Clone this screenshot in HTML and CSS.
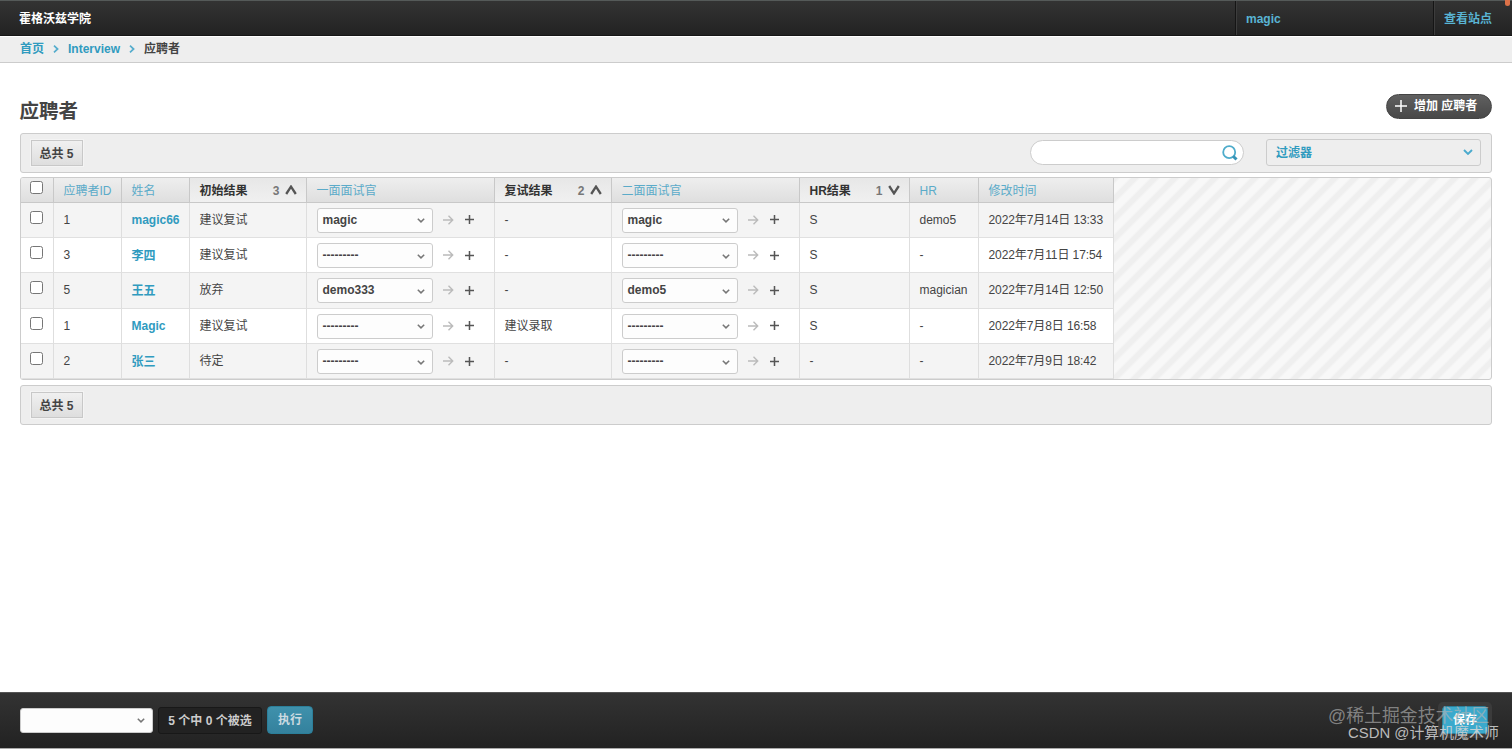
FILE: index.html
```
<!DOCTYPE html>
<html lang="zh-CN">
<head>
<meta charset="utf-8">
<title>应聘者</title>
<link rel="stylesheet" href="styles.css">
</head>
<body>
<svg class="sprite" width="0" height="0">
  <symbol id="crumb" viewBox="0 0 6 8"><path d="M1 .7 4.6 4 1 7.3" fill="none" stroke="#56adcd" stroke-width="1.7"/></symbol>
  <symbol id="down" viewBox="0 0 8 5"><path d="M.8.7 4 3.9 7.2.7" fill="none" stroke="currentColor" stroke-width="1.5"/></symbol>
  <symbol id="sort-up" viewBox="0 0 12 10"><path d="M1.2 9 6 1.6 10.800 9" fill="none" stroke="#555" stroke-width="2.300"/></symbol>
  <symbol id="sort-down" viewBox="0 0 12 10"><path d="M1.200 1 6 8.400 10.800 1" fill="none" stroke="#555" stroke-width="2.300"/></symbol>
  <symbol id="arrow" viewBox="0 0 11 10"><path d="M0 5H9.500M5.500.8 9.700 5 5.500 9.200" fill="none" stroke="#bbb" stroke-width="1.400"/></symbol>
  <symbol id="plus" viewBox="0 0 10 10"><path d="M0 5H10M5 0V10" fill="none" stroke="currentColor" stroke-width="1.700"/></symbol>
</svg>

<header class="topbar">
  <h2 class="brand">霍格沃兹学院</h2>
  <a class="user">magic</a>
  <a class="site">查看站点</a>
  <span class="marker"></span>
</header>
<nav class="crumbs">
  <a>首页</a><svg class="sep"><use href="#crumb"/></svg><a>Interview</a><svg class="sep"><use href="#crumb"/></svg><span>应聘者</span>
</nav>

<main class="content">
  <div class="heading">
    <h1>应聘者</h1>
    <a class="add"><svg class="add-icon" viewBox="0 0 12 12"><path d="M0 6H12M6 0V12" stroke="#fff" stroke-width="1.500"/></svg>增加 应聘者</a>
  </div>

  <section class="module tools">
    <span class="total">总共 5</span>
    <div class="search"><svg class="lens" viewBox="0 0 16 16"><circle cx="7.200" cy="7.200" r="6" fill="none" stroke="#4eaccb" stroke-width="1.800"/><path d="M11.200 11.200 14.500 14.500" stroke="#3793b6" stroke-width="3"/></svg></div>
    <div class="filter"><span>过滤器</span><svg class="filter-icon"><use href="#down"/></svg></div>
  </section>

  <section class="results">
    <div class="table">
      <div class="row head">
        <div><input type="checkbox"></div><div>应聘者ID</div><div>姓名</div>
        <div class="sorted"><span>初始结果</span><i>3</i><svg class="sort"><use href="#sort-up"/></svg></div>
        <div>一面面试官</div>
        <div class="sorted"><span>复试结果</span><i>2</i><svg class="sort"><use href="#sort-up"/></svg></div>
        <div>二面面试官</div>
        <div class="sorted"><span>HR结果</span><i>1</i><svg class="sort"><use href="#sort-down"/></svg></div>
        <div>HR</div><div>修改时间</div>
      </div>
      <div class="row">
        <div><input type="checkbox"></div><div>1</div><div><a>magic66</a></div><div>建议复试</div>
        <div><span class="select">magic<svg><use href="#down"/></svg></span><svg class="go"><use href="#arrow"/></svg><svg class="new"><use href="#plus"/></svg></div>
        <div>-</div>
        <div><span class="select">magic<svg><use href="#down"/></svg></span><svg class="go"><use href="#arrow"/></svg><svg class="new"><use href="#plus"/></svg></div>
        <div>S</div><div>demo5</div><div class="date">2022年7月14日 13:33</div>
      </div>
      <div class="row">
        <div><input type="checkbox"></div><div>3</div><div><a>李四</a></div><div>建议复试</div>
        <div><span class="select">---------<svg><use href="#down"/></svg></span><svg class="go"><use href="#arrow"/></svg><svg class="new"><use href="#plus"/></svg></div>
        <div>-</div>
        <div><span class="select">---------<svg><use href="#down"/></svg></span><svg class="go"><use href="#arrow"/></svg><svg class="new"><use href="#plus"/></svg></div>
        <div>S</div><div>-</div><div class="date">2022年7月11日 17:54</div>
      </div>
      <div class="row">
        <div><input type="checkbox"></div><div>5</div><div><a>王五</a></div><div>放弃</div>
        <div><span class="select">demo333<svg><use href="#down"/></svg></span><svg class="go"><use href="#arrow"/></svg><svg class="new"><use href="#plus"/></svg></div>
        <div>-</div>
        <div><span class="select">demo5<svg><use href="#down"/></svg></span><svg class="go"><use href="#arrow"/></svg><svg class="new"><use href="#plus"/></svg></div>
        <div>S</div><div>magician</div><div class="date">2022年7月14日 12:50</div>
      </div>
      <div class="row">
        <div><input type="checkbox"></div><div>1</div><div><a>Magic</a></div><div>建议复试</div>
        <div><span class="select">---------<svg><use href="#down"/></svg></span><svg class="go"><use href="#arrow"/></svg><svg class="new"><use href="#plus"/></svg></div>
        <div>建议录取</div>
        <div><span class="select">---------<svg><use href="#down"/></svg></span><svg class="go"><use href="#arrow"/></svg><svg class="new"><use href="#plus"/></svg></div>
        <div>S</div><div>-</div><div class="date">2022年7月8日 16:58</div>
      </div>
      <div class="row">
        <div><input type="checkbox"></div><div>2</div><div><a>张三</a></div><div>待定</div>
        <div><span class="select">---------<svg><use href="#down"/></svg></span><svg class="go"><use href="#arrow"/></svg><svg class="new"><use href="#plus"/></svg></div>
        <div>-</div>
        <div><span class="select">---------<svg><use href="#down"/></svg></span><svg class="go"><use href="#arrow"/></svg><svg class="new"><use href="#plus"/></svg></div>
        <div>-</div><div>-</div><div class="date">2022年7月9日 18:42</div>
      </div>
    </div>
  </section>

  <section class="module"><span class="total">总共 5</span></section>
</main>

<footer class="actions">
  <span class="select action-select"><svg><use href="#down"/></svg></span>
  <span class="counter">5 个中 0 个被选</span>
  <button class="run">执行</button>
  <span class="save-box"><button class="save">保存</button></span>
  <span class="mark mark-a">@稀土掘金技术社区</span>
  <span class="mark mark-b">CSDN @计算机魔术师</span>
</footer>
</body>
</html>
```

FILE: styles.css
```
* { box-sizing: border-box; }
body {
  margin: 0;
  height: 749px;
  display: flex;
  flex-direction: column;
  overflow: hidden;
  background: #fff;
  color: #444;
  font: 12px/16px "Liberation Sans", Arial, "Noto Sans CJK SC", sans-serif;
}
.sprite { position: absolute; }
svg { flex: none; overflow: visible; }
a { color: #309bbf; font-weight: bold; }

.topbar {
  position: relative;
  height: 36px;
  display: flex;
  border-top: 1px solid #555a59;
  border-bottom: 1px solid #161616;
  background: linear-gradient(#333, #222);
  line-height: 37px;
}
.brand { flex: 1; margin: 0; padding-left: 19px; font-size: 12px; line-height: 37px; color: #fff; }
.topbar a { color: #59b4d4; border-left: 1px solid #151515; box-shadow: inset 1px 0 #3d3d3d; padding-left: 10px; }
.user { width: 198px; }
.site { width: 79px; }
.marker { position: absolute; right: 2px; top: -1px; width: 5px; height: 6px; border-radius: 0 0 3px 3px; background: #dc7148; }

.crumbs {
  height: 27px;
  display: flex;
  align-items: center;
  gap: 9px;
  padding: 0 20px 1px;
  border-top: 1px solid #fff;
  border-bottom: 1px solid #ccc;
  background: #eee;
  font-weight: bold;
}
.sep { width: 6px; height: 8px; }

.content { flex: 1; padding: 30px 20px 0 19.500px; }
.heading { display: flex; justify-content: space-between; height: 40px; }
h1 { margin: 4px 0 0; font-size: 19.500px; line-height: 28px; }
.add {
  display: flex;
  align-items: center;
  width: 106px;
  height: 25px;
  margin-top: .5px;
  padding-left: 8px;
  border: 1px solid #444;
  border-radius: 13px;
  background: linear-gradient(#606060, #484848);
  color: #fff;
}
.add-icon { width: 12px; height: 12px; margin-right: 7px; }

.module {
  height: 40px;
  display: flex;
  align-items: center;
  padding: 0 10px 1px;
  border: 1px solid #ccc;
  border-radius: 3px;
  background: #eee;
}
.total {
  height: 26px;
  width: 52px;
  border: 1px solid #c8c8c8;
  background: linear-gradient(#f0f0f0, #dedede);
  box-shadow: 0 0 0 1px #f4f4f4;
  text-align: center;
  font-weight: bold;
  line-height: 26px;
}
.search {
  display: flex;
  justify-content: flex-end;
  align-items: center;
  width: 214px;
  height: 25px;
  margin: 0 22px 0 auto;
  padding-right: 5px;
  border: 1px solid #ccc;
  border-radius: 13px;
  background: #fff;
}
.lens { width: 16px; height: 16px; }
.filter {
  display: flex;
  align-items: center;
  justify-content: space-between;
  width: 215px;
  height: 27px;
  padding: 0 7px 0 9px;
  border: 1px solid #ccc;
  border-radius: 3px;
  color: #309bbf;
  font-weight: bold;
}
.filter-icon { width: 10px; height: 6.500px; color: #4aaacd; }

.results {
  height: 203px;
  margin: 4px 0 5px;
  border: 1px solid #ccc;
  border-radius: 3px;
  overflow: hidden;
  background: repeating-linear-gradient(135deg, #f8f8f8 0 6px, #efefef 8px 12px, #f8f8f8 14.140px);
}
.table { width: 1093px; }
.row {
  display: grid;
  grid-template-columns: 33px 68px 68px 117px 188px 117px 188px 110px 69px 135px;
  height: 35.400px;
  background: #f4f4f4;
}
.row:nth-child(odd) { background: #fff; }
.row > div {
  display: flex;
  align-items: center;
  padding: 0 0 0 10px;
  border-right: 1px solid #dedede;
  border-bottom: 1px solid #e0e0e0;
  white-space: nowrap;
}
.row > .date { letter-spacing: -.1px; }
.row.head { height: 24.500px; background: linear-gradient(#eee, #dedede); color: #5babc9; }
.row.head > div { border-color: #c8c8c8; padding: 2px 0 0 10px; }
.row > div.sorted { padding-right: 9px; background: linear-gradient(#e7e7e7, #f0f0f0); color: #333; font-weight: bold; }
.sorted i { margin-left: auto; margin-right: 5px; font-style: normal; color: #777; }
.sort { width: 12px; height: 10px; margin-bottom: 1px; }
.row a { padding-top: 1px; }
input { margin: 0 0 5px -.5px; width: 13px; height: 13px; }
.head input { margin-bottom: 6px; }
.select {
  display: flex;
  align-items: center;
  justify-content: space-between;
  width: 116px;
  height: 25px;
  margin-top: 1px;
  padding: 0 7px 1px 5px;
  border: 1px solid #ccc;
  border-radius: 3px;
  background: #fdfdfd;
  font-weight: bold;
}
.select svg { width: 8px; height: 5px; color: #777; margin-top: 2px; }
.go { width: 11px; height: 10px; margin: 0 11px 0 10px; }
.new { width: 9px; height: 9px; color: #555; }

.actions {
  position: relative;
  height: 57px;
  display: flex;
  align-items: center;
  padding: 0 20px 1px;
  border-top: 1px solid #555;
  border-bottom: 1px solid #aaa;
  background: linear-gradient(#333, #222);
}
.action-select { width: 133px; margin: 0; justify-content: flex-end; }
.counter {
  width: 104px;
  height: 27px;
  margin: 0 5px;
  border: 1px solid #181818;
  border-radius: 3px;
  background: #222;
  color: #ccc;
  font-weight: bold;
  line-height: 26px;
  text-align: center;
}
button {
  width: 46px;
  height: 28px;
  padding: 0;
  border: 1px solid #2b7f9a;
  border-radius: 4px;
  background: linear-gradient(#3f91ac, #34819d);
  color: #ccdbe1;
  font: inherit;
  font-weight: bold;
}
.save-box { margin-left: auto; padding: 4px; border-radius: 5px; background: #3b3b3b; }
.save { display: block; background: #3ba9cc; color: #fff; }
.mark { position: absolute; white-space: nowrap; }
.mark-a { left: 1328px; top: 11px; font-size: 17.900px; line-height: 24px; color: rgba(180, 180, 180, .65); }
.mark-b { left: 1348px; top: 30px; font-size: 14.900px; line-height: 20px; color: rgba(215, 215, 215, .85); }
```
